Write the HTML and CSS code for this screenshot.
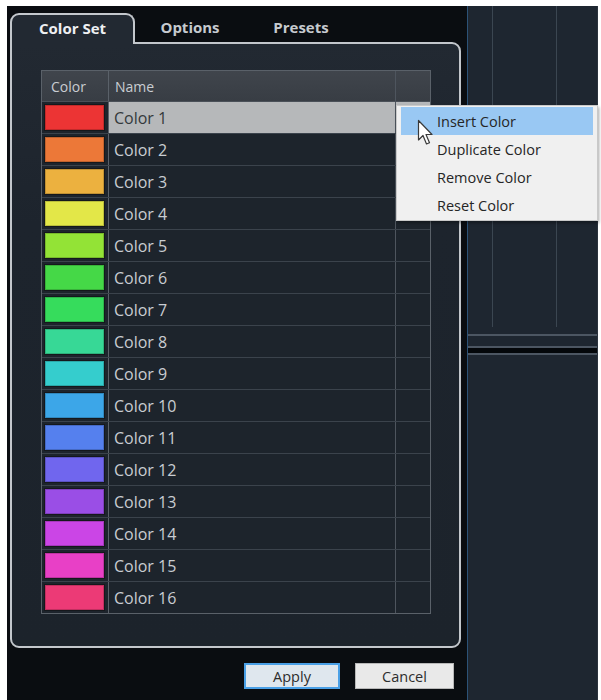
FILE: index.html
```html
<!DOCTYPE html>
<html>
<head>
<meta charset="utf-8">
<link rel="stylesheet" href="styles.css">
</head>
<body>
<div class="screen">
  <div class="dialog">
    <div class="tabs">
      <div class="tab active">Color Set</div>
      <div class="tab t-options">Options</div>
      <div class="tab t-presets">Presets</div>
    </div>
    <div class="panel">
      <div class="table">
        <div class="row head"><div class="c-color">Color</div><div class="c-name">Name</div><div class="c-extra"></div></div>
        <div class="row selected"><div class="c-color"><div class="sw" style="background:#ec3434"></div></div><div class="c-name">Color 1</div><div class="c-extra"></div></div>
        <div class="row"><div class="c-color"><div class="sw" style="background:#ec7838"></div></div><div class="c-name">Color 2</div><div class="c-extra"></div></div>
        <div class="row"><div class="c-color"><div class="sw" style="background:#ecb13f"></div></div><div class="c-name">Color 3</div><div class="c-extra"></div></div>
        <div class="row"><div class="c-color"><div class="sw" style="background:#e3e748"></div></div><div class="c-name">Color 4</div><div class="c-extra"></div></div>
        <div class="row"><div class="c-color"><div class="sw" style="background:#93e336"></div></div><div class="c-name">Color 5</div><div class="c-extra"></div></div>
        <div class="row"><div class="c-color"><div class="sw" style="background:#45d847"></div></div><div class="c-name">Color 6</div><div class="c-extra"></div></div>
        <div class="row"><div class="c-color"><div class="sw" style="background:#36dc5c"></div></div><div class="c-name">Color 7</div><div class="c-extra"></div></div>
        <div class="row"><div class="c-color"><div class="sw" style="background:#37d896"></div></div><div class="c-name">Color 8</div><div class="c-extra"></div></div>
        <div class="row"><div class="c-color"><div class="sw" style="background:#35cdcd"></div></div><div class="c-name">Color 9</div><div class="c-extra"></div></div>
        <div class="row"><div class="c-color"><div class="sw" style="background:#3ca6e8"></div></div><div class="c-name">Color 10</div><div class="c-extra"></div></div>
        <div class="row"><div class="c-color"><div class="sw" style="background:#5580ee"></div></div><div class="c-name">Color 11</div><div class="c-extra"></div></div>
        <div class="row"><div class="c-color"><div class="sw" style="background:#7066ee"></div></div><div class="c-name">Color 12</div><div class="c-extra"></div></div>
        <div class="row"><div class="c-color"><div class="sw" style="background:#9a4ee6"></div></div><div class="c-name">Color 13</div><div class="c-extra"></div></div>
        <div class="row"><div class="c-color"><div class="sw" style="background:#cb45e6"></div></div><div class="c-name">Color 14</div><div class="c-extra"></div></div>
        <div class="row"><div class="c-color"><div class="sw" style="background:#e840c6"></div></div><div class="c-name">Color 15</div><div class="c-extra"></div></div>
        <div class="row"><div class="c-color"><div class="sw" style="background:#ec3a76"></div></div><div class="c-name">Color 16</div><div class="c-extra"></div></div>
      </div>
    </div>
    <div class="buttons">
      <div class="btn primary">Apply</div>
      <div class="btn">Cancel</div>
    </div>
  </div>
  <div class="side">
    <div class="side-top">
      <div class="scol scol1"></div>
      <div class="scol scol2"></div>
      <div class="scol scol3"></div>
    </div>
    <div class="sline first"></div>
    <div class="sline second"></div>
    <div class="sband"></div>
    <div class="sline third"></div>
    <div class="side-rest"></div>
  </div>
  <div class="menu">
    <div class="mi hl">Insert Color</div>
    <div class="mi">Duplicate Color</div>
    <div class="mi">Remove Color</div>
    <div class="mi">Reset Color</div>
  </div>
  <svg class="cursor" width="18" height="28" viewBox="0 0 18 28">
    <path d="M1.5 1.5 L1.5 21 L6 16.5 L9.5 25 L12.5 23.8 L9 15.5 L15 15.5 Z" fill="#ffffff" stroke="#3a3a3a" stroke-width="1.2" stroke-linejoin="round"/>
  </svg>
</div>
</body>
</html>
```

FILE: styles.css
```css
* { box-sizing: border-box; }
html, body { margin: 0; padding: 0; }
body {
  background: #ffffff;
  font-family: "Open Sans", "Noto Sans", "Liberation Sans", sans-serif;
  font-size: 14px;
  width: 601px;
  height: 700px;
  overflow: hidden;
}
.screen {
  position: relative;
  display: flex;
  margin: 6px 3px 0 7px;
  height: 694px;
}
.dialog {
  width: 460px;
  height: 694px;
  background: #0a0d11;
  padding: 7px 6px 0 3px;
  display: flex;
  flex-direction: column;
}
.tabs {
  display: flex;
  height: 31px;
  margin-bottom: -2px;
  position: relative;
  z-index: 1;
}
.tab {
  font-weight: 700;
  font-size: 15px;
  color: #c6cacf;
  display: flex;
  align-items: center;
  justify-content: center;
  height: 29px;
}
.tab.active {
  width: 125px;
  height: 31px;
  padding-bottom: 3px;
  color: #eef0f2;
  background: #222932;
  border: 2px solid #c3c7cc;
  border-bottom: none;
  border-radius: 9px 9px 0 0;
}
.t-options { width: 110px; padding-bottom: 1px; }
.t-presets { width: 112px; padding-bottom: 1px; }
.panel {
  height: 606px;
  border: 2px solid #c3c7cc;
  border-radius: 0 9px 9px 9px;
  background: linear-gradient(#222932, #1d242d 30%, #1c232b);
  padding: 26px 0 0 29px;
}
.table {
  width: 390px;
  border: 1px solid #5a6169;
  background: #1d242c;
}
.row {
  display: flex;
  height: 32px;
  border-bottom: 1px solid #3b434c;
  font-size: 16px;
}
.row:last-child { border-bottom: none; height: 31px; }
.row > div {
  height: 100%;
  display: flex;
  align-items: center;
}
.c-color {
  width: 67px;
  border-right: 1px solid #5a6169;
  padding-left: 2px;
}
.c-name {
  width: 287px;
  border-right: 1px solid #4e555e;
  padding-left: 5px;
  color: #c9cdd2;
}
.c-extra { flex: 1; }
.row.head {
  height: 31px;
  font-size: 14px;
  background: linear-gradient(#40454c, #383d44);
  border-bottom: 1px solid #4a5058;
  color: #c9cdd2;
}
.row.head .c-color { padding-left: 9px; }
.row.head .c-name { padding-left: 6px; }
.row.selected .c-name,
.row.selected .c-extra {
  background: #b6b8ba;
  color: #34383c;
}
.sw {
  width: 61px;
  height: 27px;
  border: 1px solid #15181c;
  box-shadow: inset 0 0 0 1px rgba(0, 0, 0, 0.18);
}
.buttons {
  display: flex;
  justify-content: flex-end;
  gap: 15px;
  margin-top: 15px;
  padding-right: 7px;
}
.btn {
  width: 99px;
  height: 26px;
  display: flex;
  align-items: center;
  justify-content: center;
  background: #e9e9e9;
  border: 1px solid #b8b8b8;
  color: #2d2d2d;
  font-size: 14.5px;
}
.btn.primary {
  width: 96px;
  background: #dfe7ee;
  border: 2px solid #4aa0e6;
}
.side {
  width: 131px;
  height: 694px;
  background: #1e2630;
  border-left: 1px solid #2c5277;
  border-right: 1px solid #2b333d;
  display: flex;
  flex-direction: column;
}
.side-top {
  display: flex;
  height: 321px;
}
.scol { height: 100%; }
.scol1 { width: 25px; border-right: 1px solid #3b4651; }
.scol2 { width: 64px; border-right: 1px solid #3b4651; }
.scol3 { flex: 1; }
.sline { height: 2px; background: #4c5662; }
.sline.first { margin-top: 7px; }
.sline.second { margin-top: 10px; }
.sband { height: 5px; background: #04070a; }
.side-rest { flex: 1; background: #1e2630; }
.menu {
  position: absolute;
  left: 389px;
  top: 99px;
  width: 202px;
  height: 116px;
  background: #f0f0f0;
  border: 1px solid #c9c9c9;
  box-shadow: 1px 2px 3px rgba(0, 0, 0, 0.35);
  padding: 1px 4px 0 4px;
  z-index: 5;
  font-size: 14.5px;
}
.mi {
  height: 28px;
  display: flex;
  align-items: center;
  padding-left: 36px;
  color: #262626;
}
.mi.hl { background: #99c8f3; }
.cursor {
  position: absolute;
  left: 410px;
  top: 113px;
  z-index: 6;
}
```
